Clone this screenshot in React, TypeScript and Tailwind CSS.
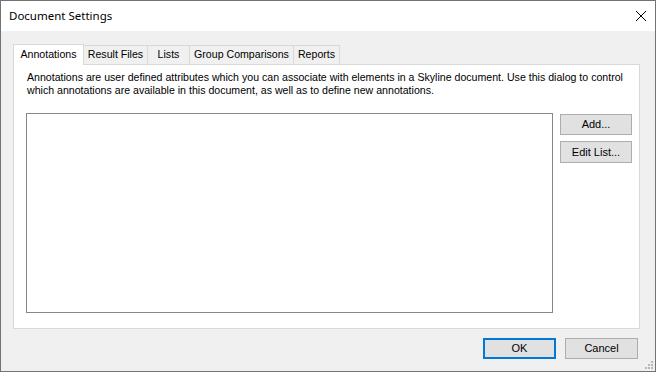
import React from "react";

const tabs = [
  { label: "Result Files", w: "w-[64px]" },
  { label: "Lists", w: "w-[42px]" },
  { label: "Group Comparisons", w: "w-[104px]" },
  { label: "Reports", w: "w-[46px]" },
];

export default function App() {
  return (
    <div className="w-[656px] h-[372px] border border-[#737373] bg-[#f0f0f0] flex flex-col font-['Liberation_Sans',Arial,sans-serif] text-[10.6px] text-black relative overflow-hidden">
      <div className="h-[30px] bg-white flex items-center justify-between shrink-0">
        <span className="pl-[8px] text-[11.5px] font-['Noto_Sans','Liberation_Sans',sans-serif] text-black">Document Settings</span>
        <svg width="12" height="12" viewBox="0 0 12 12" className="mr-[8px]">
          <path d="M1 1 L11 11 M11 1 L1 11" stroke="#000" strokeWidth="1" />
        </svg>
      </div>
      <div className="flex-1 flex flex-col pl-[12px] pt-[12px]">
        <div className="flex items-end h-[21px] whitespace-nowrap">
          <div className="w-[71px] h-[21px] bg-white border border-b-0 border-[#d9d9d9] flex items-center justify-center relative z-10 -mb-px">
            <span>Annotations</span>
          </div>
          {tabs.map((t) => (
            <div key={t.label} className={`${t.w} h-[19px] bg-[#f0f0f0] border border-b-0 border-l-0 border-[#d9d9d9] flex items-center justify-center`}>
              <span>{t.label}</span>
            </div>
          ))}
        </div>
        <div className="w-[627px] h-[265px] bg-white border border-[#d9d9d9] flex flex-col">
          <div className="pl-[13px] pt-[6px] leading-[13px] whitespace-nowrap">
            <p>Annotations are user defined attributes which you can associate with elements in a Skyline document. Use this dialog to control</p>
            <p>which annotations are available in this document, as well as to define new annotations.</p>
          </div>
          <div className="flex mt-[16px] pl-[12px] gap-[7px]">
            <div className="w-[527px] h-[200px] border border-[#828790] bg-white" />
            <div className="flex flex-col gap-[6px] pt-[1px] text-[11px]">
              <button className="w-[72px] h-[21px] bg-[#e1e1e1] border border-[#adadad] flex items-center justify-center">Add...</button>
              <button className="w-[72px] h-[22px] bg-[#e1e1e1] border border-[#adadad] flex items-center justify-center">Edit List...</button>
            </div>
          </div>
        </div>
        <div className="flex justify-end gap-[9px] mt-[9px] pr-[17px] text-[11px]">
          <button className="w-[73px] h-[21px] bg-[#e1e1e1] border-2 border-[#0078d7] flex items-center justify-center">OK</button>
          <button className="w-[73px] h-[21px] bg-[#e1e1e1] border border-[#adadad] flex items-center justify-center">Cancel</button>
        </div>
      </div>
      <svg width="8" height="8" viewBox="0 0 8 8" className="absolute right-[2px] bottom-[2px]">
        <rect x="6" y="0" width="2" height="2" fill="#b8b8b8" />
        <rect x="3" y="3" width="2" height="2" fill="#b8b8b8" />
        <rect x="6" y="3" width="2" height="2" fill="#b8b8b8" />
        <rect x="0" y="6" width="2" height="2" fill="#b8b8b8" />
        <rect x="3" y="6" width="2" height="2" fill="#b8b8b8" />
        <rect x="6" y="6" width="2" height="2" fill="#b8b8b8" />
      </svg>
    </div>
  );
}
